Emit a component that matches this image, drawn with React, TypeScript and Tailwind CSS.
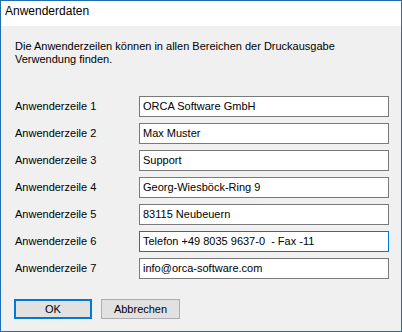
import React from 'react';

const rows: { label: string; value: string; focused?: boolean }[] = [
  { label: 'Anwenderzeile 1', value: 'ORCA Software GmbH' },
  { label: 'Anwenderzeile 2', value: 'Max Muster' },
  { label: 'Anwenderzeile 3', value: 'Support' },
  { label: 'Anwenderzeile 4', value: 'Georg-Wiesböck-Ring 9' },
  { label: 'Anwenderzeile 5', value: '83115 Neubeuern' },
  { label: 'Anwenderzeile 6', value: 'Telefon +49 8035 9637-0  - Fax -11', focused: true },
  { label: 'Anwenderzeile 7', value: 'info@orca-software.com' },
];

const App: React.FC = () => {
  return (
    <div
      className="w-[402px] h-[332px] border border-[#1f6fb2] bg-[#f0f0f0] flex flex-col text-black"
      style={{ fontFamily: '"Liberation Sans", Arial, sans-serif' }}
    >
      <div className="h-[25px] bg-white pl-[4px] pt-[3px] text-[12px] leading-[15px]">Anwenderdaten</div>

      <div className="flex flex-col pl-[14px] pt-[14px]">
        <p className="text-[11px] leading-[13px] w-[330px]">
          Die Anwenderzeilen können in allen Bereichen der Druckausgabe
          <br />
          Verwendung finden.
        </p>

        <div className="flex flex-col gap-[6px] mt-[30px]">
          {rows.map(({ label, value, focused }) => (
            <div key={label} className="flex items-center h-[21px]">
              <span className="w-[124px] text-[11px] leading-[13px]">{label}</span>
              <div
                className={`w-[250px] h-[21px] bg-white border flex items-center pl-[3px] text-[11px] whitespace-pre ${
                  focused ? 'border-[#0078d7]' : 'border-[#7a7a7a]'
                }`}
              >
                {value}
              </div>
            </div>
          ))}
        </div>

        <div className="flex gap-[9px] mt-[20px] -ml-[1px]">
          <button className="w-[78px] h-[20px] bg-[#e1e1e1] border-2 border-[#0078d7] text-[11px] leading-none">
            OK
          </button>
          <button className="w-[79px] h-[20px] bg-[#e1e1e1] border border-[#adadad] text-[11px] leading-none">
            Abbrechen
          </button>
        </div>
      </div>
    </div>
  );
};

export default App;
